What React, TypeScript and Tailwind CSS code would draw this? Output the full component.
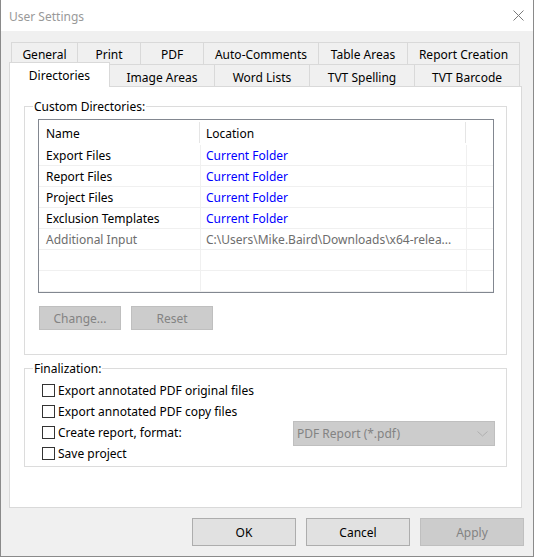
import React from "react";

const rowOneTabs = [
  { label: "General", w: "w-[67px] border-l" },
  { label: "Print", w: "w-[63px]" },
  { label: "PDF", w: "w-[63px]" },
  { label: "Auto-Comments", w: "w-[115px]" },
  { label: "Table Areas", w: "w-[89px]" },
  { label: "Report Creation", w: "w-[112px]" },
];

const rowTwoTabs = [
  { label: "Image Areas", w: "w-[105px]" },
  { label: "Word Lists", w: "w-[95px]" },
  { label: "TVT Spelling", w: "w-[105px]" },
  { label: "TVT Barcode", w: "w-[105px]" },
];

const dirs = [
  { name: "Export Files", loc: "Current Folder", muted: false },
  { name: "Report Files", loc: "Current Folder", muted: false },
  { name: "Project Files", loc: "Current Folder", muted: false },
  { name: "Exclusion Templates", loc: "Current Folder", muted: false },
  { name: "Additional Input", loc: "C:\\Users\\Mike.Baird\\Downloads\\x64-relea...", muted: true },
  { name: "", loc: "", muted: false },
  { name: "", loc: "", muted: false },
];

const checks = [
  "Export annotated PDF original files",
  "Export annotated PDF copy files",
  "Create report, format:",
  "Save project",
];

const Checkbox = () => (
  <div className="w-[13px] h-[13px] border border-[#333333] bg-white shrink-0" />
);

export default function App() {
  return (
    <div
      className="w-[534px] h-[557px] bg-[#f0f0f0] border-l border-r border-b border-[#8a8a8a] flex flex-col text-[12px] text-black"
      style={{ fontFamily: '"Noto Sans", "Open Sans", sans-serif' }}
    >
      {/* title bar */}
      <div className="h-[31px] bg-white flex items-center justify-between pl-[8px] pr-[9px] shrink-0">
        <span className="text-[#999999] pt-[2px]">User Settings</span>
        <svg width="11" height="11" viewBox="0 0 11 11">
          <path d="M0.5 0.5 L10.5 10.5 M10.5 0.5 L0.5 10.5" stroke="#7a7a7a" strokeWidth="1" />
        </svg>
      </div>

      {/* tabs */}
      <div className="mt-[11px] flex flex-col">
        <div className="flex h-[22px] ml-[10px]">
          {rowOneTabs.map((t) => (
            <div
              key={t.label}
              className={`${t.w} h-[22px] border-t border-r border-[#d9d9d9] flex items-center justify-center pt-[3px]`}
            >
              {t.label}
            </div>
          ))}
        </div>
        <div className="flex h-[23px] ml-[8px] -mb-px relative z-10">
          <div className="w-[101px] h-[25px] -mt-[2px] bg-white border-l border-t border-r border-[#d9d9d9] flex items-start justify-center pt-[4px]">
            Directories
          </div>
          {rowTwoTabs.map((t) => (
            <div
              key={t.label}
              className={`${t.w} h-[22px] border-t border-r border-[#d9d9d9] flex items-center justify-center pt-[4px]`}
            >
              {t.label}
            </div>
          ))}
        </div>
      </div>

      {/* panel */}
      <div className="ml-[8px] w-[513px] h-[422px] bg-white border border-[#d9d9d9] px-[14px] pt-[19px]">
        {/* custom directories */}
        <div className="relative border border-[#dcdcdc] pt-[12px] pl-[13px] pb-[24px] h-[249px]">
          <span className="absolute left-[8px] -top-[8px] bg-white px-px leading-[16px]">
            Custom Directories:
          </span>
          <div className="w-[456px] h-[174px] border border-[#828790] flex flex-col">
            <div className="flex h-[25px]">
              <div className="w-[161px] border-r border-[#e5e5e5] my-[2px] flex items-center pl-[7px] pt-[2px]">Name</div>
              <div className="w-[266px] border-r border-[#e5e5e5] my-[2px] flex items-center pl-[6px] pt-[2px]">Location</div>
              <div className="flex-1" />
            </div>
            {dirs.map((d, i) => (
              <div
                key={i}
                className={`flex h-[21px] border-b border-[#f0f0f0] ${d.muted ? "text-[#6d6d6d]" : ""}`}
              >
                <div className="w-[162px] border-r border-[#f0f0f0] flex items-center pl-[7px] pt-[2px] whitespace-nowrap">
                  {d.name}
                </div>
                <div
                  className={`w-[266px] border-r border-[#f0f0f0] flex items-center pl-[5px] pt-[2px] whitespace-nowrap overflow-hidden ${
                    d.muted ? "" : "text-[#0000ff]"
                  }`}
                >
                  {d.loc}
                </div>
                <div className="flex-1" />
              </div>
            ))}
          </div>
          <div className="flex gap-[10px] mt-[13px] ml-px">
            <div className="w-[82px] h-[24px] bg-[#cccccc] border border-[#bfbfbf] text-[#838383] flex items-center justify-center pt-px">
              Change...
            </div>
            <div className="w-[82px] h-[24px] bg-[#cccccc] border border-[#bfbfbf] text-[#838383] flex items-center justify-center pt-px">
              Reset
            </div>
          </div>
        </div>

        {/* finalization */}
        <div className="relative mt-[13px] border border-[#dcdcdc] h-[99px] pt-[11px] pl-[17px] pr-[11px]">
          <span className="absolute left-[8px] -top-[8px] bg-white px-px leading-[16px]">Finalization:</span>
          {checks.map((c) => (
            <div key={c} className="flex items-center h-[21px]">
              <Checkbox />
              <span className="ml-[3px] whitespace-nowrap pt-px">{c}</span>
              {c === "Create report, format:" && (
                <div className="ml-auto w-[202px] h-[25px] shrink-0 bg-[#cccccc] border border-[#bfbfbf] flex items-center justify-between pl-[3px] pr-[6px] text-[#838383] mt-[2px]">
                  <span className="pt-px">PDF Report (*.pdf)</span>
                  <svg width="11" height="6" viewBox="0 0 11 6">
                    <path d="M0.5 0.5 L5.5 5 L10.5 0.5" fill="none" stroke="#b0b0b0" strokeWidth="1" />
                  </svg>
                </div>
              )}
            </div>
          ))}
        </div>
      </div>

      {/* dialog buttons */}
      <div className="flex justify-end gap-[10px] mt-[10px] pr-[9px]">
        <div className="w-[104px] h-[28px] bg-[#e1e1e1] border border-[#adadad] flex items-center justify-center pt-px">OK</div>
        <div className="w-[104px] h-[28px] bg-[#e1e1e1] border border-[#adadad] flex items-center justify-center pt-px">Cancel</div>
        <div className="w-[104px] h-[28px] bg-[#cccccc] border border-[#bfbfbf] text-[#838383] flex items-center justify-center pt-px">Apply</div>
      </div>
    </div>
  );
}
